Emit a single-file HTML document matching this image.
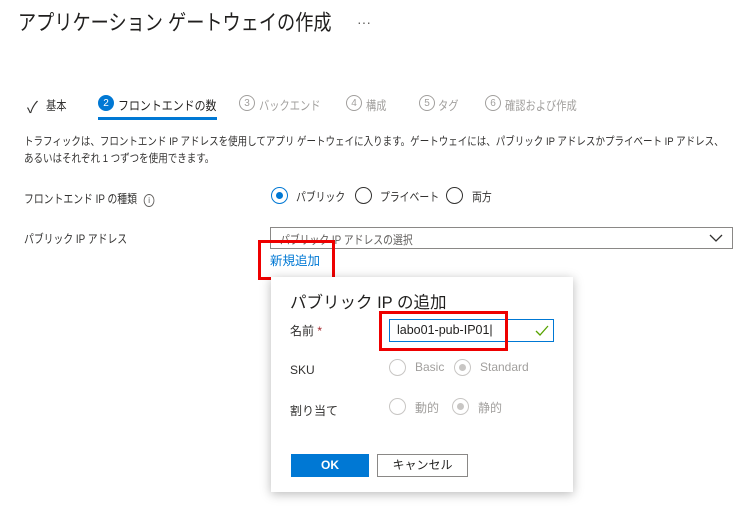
<!DOCTYPE html>
<html><head><meta charset="utf-8"><style>
*{margin:0;padding:0;box-sizing:border-box}
body{width:750px;height:507px;background:#fff;position:relative;overflow:hidden;font-family:"Liberation Sans","Noto Sans CJK JP",sans-serif;color:#323130}
.a{position:absolute;white-space:nowrap}
.s{transform:scaleX(.82);transform-origin:0 0}
.t{font-size:12.5px}
.g{color:#a19f9d}
.num{position:absolute;width:16px;height:16px;border-radius:50%;border:1px solid #a19f9d;color:#a19f9d;font-size:10px;display:flex;align-items:center;justify-content:center}
.rad{position:absolute;width:17px;height:17px;border-radius:50%;border:1.3px solid #323130}
.rad.on::after{content:"";position:absolute;left:3.5px;top:3.5px;width:7px;height:7px;border-radius:50%;background:#0078d4}
.rad.on{border-color:#0078d4}
.rd{position:absolute;width:17px;height:17px;border-radius:50%;border:1px solid #c8c6c4}
.rd.on::after{content:"";position:absolute;left:4px;top:4px;width:7px;height:7px;border-radius:50%;background:#c8c6c4}
.red{position:absolute;border:3px solid #e00}
</style></head><body>
<div class="a" style="left:18px;top:8px;font-size:21.5px;color:#201f1e;line-height:30px;transform:scaleX(.845);transform-origin:0 0">アプリケーション ゲートウェイの作成</div>
<div class="a" style="left:357px;top:14px;font-size:14px;color:#605e5c">···</div>

<div class="a" style="left:27px;top:94px;font-size:16px">✓</div>
<div class="a t s" style="left:46px;top:95px">基本</div>
<div class="num" style="left:98px;top:95px;background:#0078d4;border-color:#0078d4;color:#fff">2</div>
<div class="a t" style="left:118px;top:95px;color:#201f1e;transform:scaleX(.875);transform-origin:0 0">フロントエンドの数</div>
<div class="a" style="left:98px;top:117px;width:119px;height:3px;background:#0078d4"></div>
<div class="num" style="left:239px;top:95px">3</div><div class="a t g s" style="left:259px;top:95px">バックエンド</div>
<div class="num" style="left:346px;top:95px">4</div><div class="a t g s" style="left:366px;top:95px">構成</div>
<div class="num" style="left:419px;top:95px">5</div><div class="a t g s" style="left:438px;top:95px">タグ</div>
<div class="num" style="left:485px;top:95px">6</div><div class="a t g s" style="left:505px;top:95px">確認および作成</div>

<div class="a" style="left:24px;top:134px;font-size:11.2px;line-height:17px;color:#323130;transform:scaleX(.85);transform-origin:0 0">トラフィックは、フロントエンド IP アドレスを使用してアプリ ゲートウェイに入ります。ゲートウェイには、パブリック IP アドレスかプライベート IP アドレス、<br>あるいはそれぞれ 1 つずつを使用できます。</div>

<div class="a s" style="left:24px;top:190px;font-size:12px">フロントエンド IP の種類 <span style="display:inline-block;width:13px;height:13px;border:1px solid #605e5c;border-radius:50%;font-size:8px;text-align:center;line-height:11px;margin-left:5px">i</span></div>
<div class="rad on" style="left:271px;top:187px"></div><div class="a s" style="left:296px;top:188px;font-size:12px">パブリック</div>
<div class="rad" style="left:355px;top:187px"></div><div class="a s" style="left:380px;top:188px;font-size:12px">プライベート</div>
<div class="rad" style="left:446px;top:187px"></div><div class="a s" style="left:472px;top:188px;font-size:12px">両方</div>

<div class="a s" style="left:24px;top:230px;font-size:12px">パブリック IP アドレス</div>
<div class="a" style="left:270px;top:227px;width:463px;height:22px;border:1px solid #8a8886"></div>
<div class="a s" style="left:280px;top:231px;font-size:12px;color:#605e5c">パブリック IP アドレスの選択</div>
<svg class="a" style="left:709px;top:233px" width="14" height="10"><path d="M1 2 L7 8 L13 2" fill="none" stroke="#323130" stroke-width="1.3"/></svg>
<div class="a" style="left:270px;top:250px;font-size:12.5px;color:#0078d4">新規追加</div>
<div class="red" style="left:258px;top:240px;width:77px;height:40px"></div>

<div class="a" style="left:271px;top:277px;width:302px;height:215px;background:#fff;box-shadow:0 2px 10px rgba(0,0,0,.28)"></div>
<div class="a" style="left:290px;top:289px;font-size:16.5px;color:#201f1e">パブリック IP の追加</div>
<div class="a" style="left:290px;top:322px;font-size:12px">名前 <span style="color:#a4262c">*</span></div>
<div class="a" style="left:389px;top:319px;width:165px;height:23px;border:1.5px solid #0078d4"></div>
<div class="a" style="left:397px;top:323px;font-size:12.5px;color:#201f1e">labo01-pub-IP01|</div>
<svg class="a" style="left:535px;top:325px" width="14" height="11"><path d="M1 6 L5 10 L13 1" fill="none" stroke="#57a300" stroke-width="1.3"/></svg>
<div class="red" style="left:379px;top:311px;width:129px;height:40px"></div>

<div class="a" style="left:290px;top:363px;font-size:12px">SKU</div>
<div class="rd" style="left:389px;top:359px"></div><div class="a g" style="left:415px;top:360px;font-size:12px">Basic</div>
<div class="rd on" style="left:454px;top:359px"></div><div class="a g" style="left:480px;top:360px;font-size:12px">Standard</div>
<div class="a" style="left:290px;top:402px;font-size:12px">割り当て</div>
<div class="rd" style="left:389px;top:398px"></div><div class="a g" style="left:415px;top:399px;font-size:12px">動的</div>
<div class="rd on" style="left:452px;top:398px"></div><div class="a g" style="left:478px;top:399px;font-size:12px">静的</div>

<div class="a" style="left:291px;top:454px;width:78px;height:23px;background:#0078d4;color:#fff;font-size:12px;font-weight:bold;text-align:center;line-height:23px">OK</div>
<div class="a" style="left:377px;top:454px;width:91px;height:23px;border:1px solid #8a8886;font-size:12px;text-align:center;line-height:21px;color:#201f1e">キャンセル</div>
</body></html>
